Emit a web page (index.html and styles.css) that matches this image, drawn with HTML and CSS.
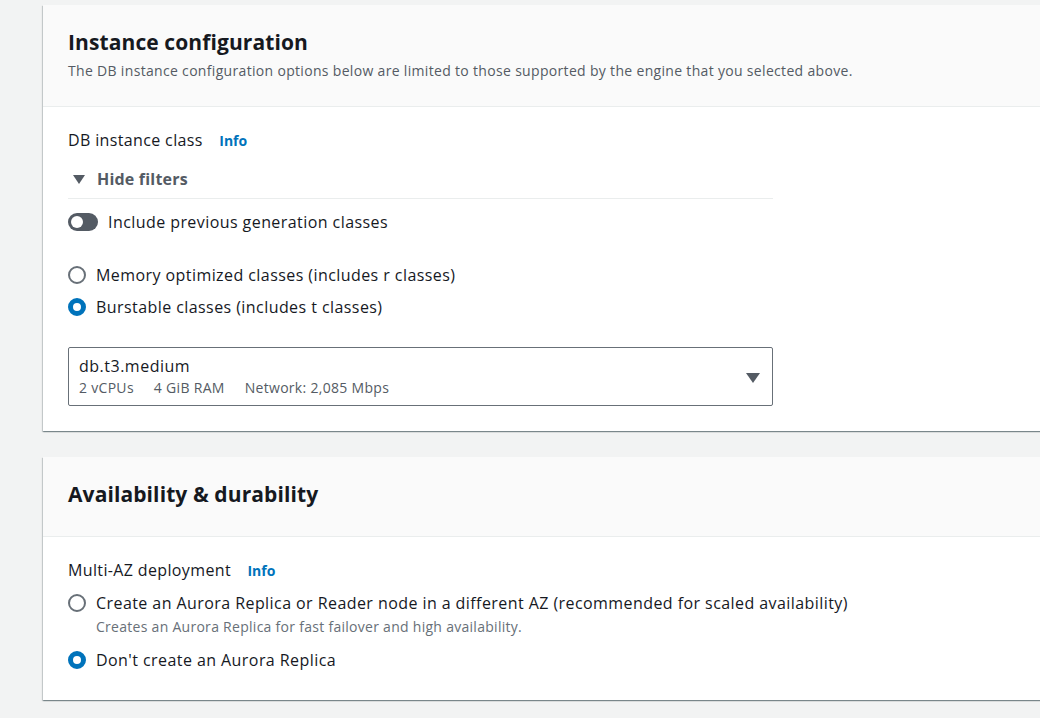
FILE: index.html
```html
<!DOCTYPE html>
<html>
<head>
<meta charset="utf-8">
<link rel="stylesheet" href="styles.css">
</head>
<body>
<main class="page">
  <section class="card card-first">
    <header class="card-header">
      <h2 class="card-title">Instance configuration</h2>
      <p class="card-desc">The DB instance configuration options below are limited to those supported by the engine that you selected above.</p>
    </header>
    <div class="card-body">
      <div class="form-field">
        <div class="field-label">DB instance class <span class="info">Info</span></div>
        <div class="filters">
          <div class="filters-head"><span class="caret-down"></span>Hide filters</div>
          <div class="toggle-row">
            <span class="toggle"><span class="knob"></span></span>
            <span>Include previous generation classes</span>
          </div>
          <div class="radio-group">
            <label class="radio-row"><span class="radio"></span><span>Memory optimized classes (includes r classes)</span></label>
            <label class="radio-row"><span class="radio checked"></span><span>Burstable classes (includes t classes)</span></label>
          </div>
          <div class="select">
            <div class="select-text">
              <div class="select-value">db.t3.medium</div>
              <div class="select-tags"><span>2 vCPUs</span><span>4 GiB RAM</span><span>Network: 2,085 Mbps</span></div>
            </div>
            <span class="select-caret"></span>
          </div>
        </div>
      </div>
    </div>
  </section>

  <section class="card card-second">
    <header class="card-header card-header-plain">
      <h2 class="card-title">Availability &amp; durability</h2>
    </header>
    <div class="card-body card-body-second">
      <div class="field-label">Multi-AZ deployment <span class="info">Info</span></div>
      <div class="radio-group tight">
        <label class="radio-row"><span class="radio"></span><span>Create an Aurora Replica or Reader node in a different AZ (recommended for scaled availability)</span></label>
        <div class="radio-desc">Creates an Aurora Replica for fast failover and high availability.</div>
        <label class="radio-row second"><span class="radio checked"></span><span>Don't create an Aurora Replica</span></label>
      </div>
    </div>
  </section>
</main>
</body>
</html>
```

FILE: styles.css
```css
html, body {
  margin: 0;
  padding: 0;
  background: #f2f3f3;
  overflow: hidden;
}
body {
  font-family: "Open Sans", "Noto Sans", "Liberation Sans", sans-serif;
  color: #16191f;
  font-size: 16px;
  line-height: 22px;
  width: 1040px;
  height: 718px;
}
.page {
  padding: 5px 0 0 43px;
  display: flex;
  flex-direction: column;
  gap: 26px;
}
.card {
  width: 1040px;
  background: #fff;
  box-shadow: 0 1px 1px 0 rgba(0, 28, 36, 0.3), 1px 1px 1px 0 rgba(0, 28, 36, 0.15), -1px 1px 1px 0 rgba(0, 28, 36, 0.15);
}
.card-header {
  background: #fafafa;
  border-bottom: 1px solid #eaeded;
  padding: 23px 0 24px 25px;
}
.card-header-plain {
  padding: 23px 0 28px 25px;
}
.card-title {
  margin: 0;
  font-size: 21px;
  line-height: 28px;
  font-weight: 700;
  letter-spacing: 0.1px;
}
.card-desc {
  margin: 4px 0 0;
  font-size: 14px;
  line-height: 22px;
  color: #545b64;
  letter-spacing: 0.32px;
}
.card-body {
  padding: 22px 0 25px 25px;
}
.card-body-second {
  padding: 22px 0 29px 25px;
}
.field-label {
  font-size: 16px;
  letter-spacing: 0.36px;
}
.info {
  color: #0073bb;
  font-weight: 700;
  font-size: 14px;
  letter-spacing: 0;
  margin-left: 12px;
}
.filters {
  width: 705px;
  margin-top: 16px;
}
.filters-head {
  display: flex;
  align-items: center;
  font-weight: 700;
  font-size: 16px;
  letter-spacing: 0.2px;
  color: #545b64;
  padding-bottom: 8px;
  border-bottom: 1px solid #eaeded;
}
.caret-down {
  width: 0;
  height: 0;
  border-left: 6px solid transparent;
  border-right: 6px solid transparent;
  border-top: 9px solid #545b64;
  margin: 1px 12px 0 5px;
}
.toggle-row {
  display: flex;
  align-items: center;
  gap: 10px;
  margin-top: 12px;
  font-size: 16px;
  letter-spacing: 0.43px;
}
.toggle {
  width: 30px;
  height: 18px;
  border-radius: 9px;
  background: #545b64;
  position: relative;
  flex: none;
}
.knob {
  position: absolute;
  left: 3px;
  top: 3px;
  width: 12px;
  height: 12px;
  border-radius: 50%;
  background: #fff;
}
.radio-group {
  display: flex;
  flex-direction: column;
  gap: 10px;
  margin-top: 31px;
}
.radio-group.tight {
  margin-top: 10px;
  gap: 0;
}
.radio-row {
  display: flex;
  align-items: center;
  gap: 10px;
  font-size: 16px;
  letter-spacing: 0.43px;
}
.radio-row.second {
  margin-top: 12px;
}
.radio {
  box-sizing: border-box;
  width: 18px;
  height: 18px;
  border-radius: 50%;
  border: 2px solid #687078;
  background: #fff;
  flex: none;
}
.radio.checked {
  border: 5px solid #0073bb;
}
.radio-desc {
  padding-left: 28px;
  font-size: 14px;
  line-height: 20px;
  color: #687078;
  margin-top: 3px;
  letter-spacing: 0.28px;
}
.select {
  box-sizing: border-box;
  margin-top: 29px;
  height: 59px;
  border: 1px solid #687078;
  border-radius: 2px;
  display: flex;
  align-items: center;
  padding: 0 12px 0 10px;
}
.select-text {
  flex: 1;
}
.select-value {
  font-size: 16px;
  line-height: 22px;
  letter-spacing: 0.5px;
}
.select-tags {
  display: flex;
  gap: 20px;
  font-size: 14px;
  line-height: 20px;
  color: #545b64;
  margin-top: 1px;
  letter-spacing: 0.3px;
}
.select-caret {
  width: 0;
  height: 0;
  border-left: 7px solid transparent;
  border-right: 7px solid transparent;
  border-top: 10px solid #545b64;
  margin-top: 2px;
}
```
